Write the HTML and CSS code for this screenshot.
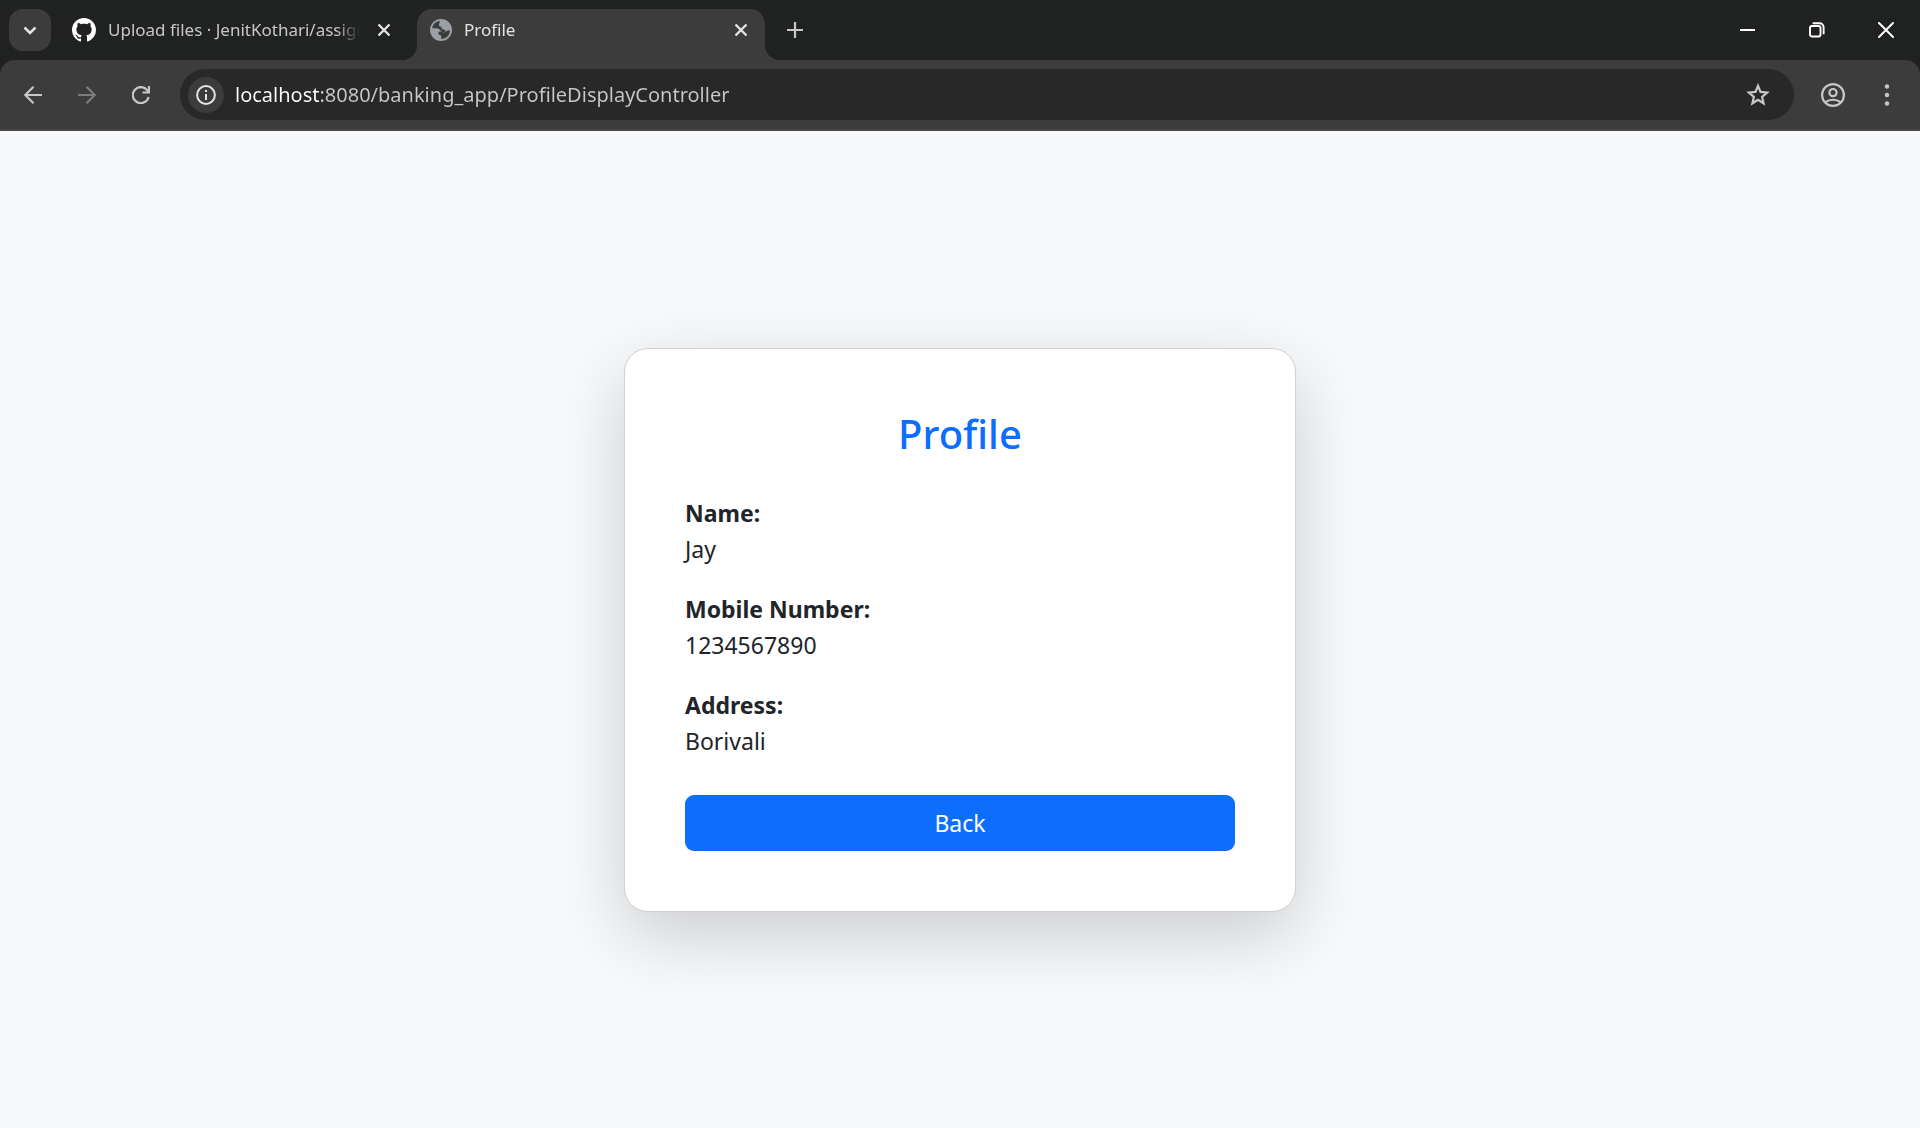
FILE: index.html
```html
<!DOCTYPE html>
<html lang="en">
<head>
  <meta charset="utf-8">
  <meta name="viewport" content="width=device-width, initial-scale=1">
  <title>Profile</title>
  <link rel="stylesheet" href="styles.css">
</head>
<body>
  <header class="browser">
    <div class="tab-strip">
      <button class="tab-search" type="button" aria-label="Search tabs">
        <svg width="14" height="9" viewBox="0 0 14 9"><path d="M1.500 1.500 7 7l5.500-5.500" fill="none" stroke="currentColor" stroke-width="2.500"/></svg>
      </button>
      <div class="tab">
        <svg class="tab-icon-github" width="24" height="24" viewBox="0 0 16 16"><path fill="currentColor" d="M8 0C3.580 0 0 3.580 0 8c0 3.540 2.290 6.530 5.470 7.590.4.070.55-.17.55-.38 0-.19-.01-.82-.01-1.490-2.010.37-2.530-.49-2.690-.94-.09-.23-.48-.94-.82-1.130-.28-.15-.68-.52-.01-.53.63-.01 1.080.58 1.230.82.72 1.210 1.870.87 2.330.66.07-.52.28-.87.51-1.070-1.780-.2-3.640-.89-3.640-3.950 0-.87.31-1.590.82-2.150-.08-.2-.36-1.020.08-2.120 0 0 .67-.21 2.200.82.64-.18 1.320-.27 2-.27s1.360.09 2 .27c1.530-1.040 2.200-.82 2.200-.82.44 1.100.16 1.920.08 2.120.51.56.82 1.270.82 2.150 0 3.070-1.870 3.750-3.650 3.950.29.25.54.73.54 1.480 0 1.070-.01 1.930-.01 2.200 0 .21.15.46.55.38A8.010 8.010 0 0 0 16 8c0-4.420-3.580-8-8-8z"/></svg>
        <span class="tab-title">Upload files · JenitKothari/assign</span>
        <button class="tab-close" type="button" aria-label="Close tab">
          <svg width="14" height="14" viewBox="0 0 14 14"><path d="m1.500 1.500 11 11m0-11-11 11" stroke="currentColor" stroke-width="2.400"/></svg>
        </button>
      </div>
      <div class="tab tab-active">
        <svg class="tab-icon-globe" width="22" height="22" viewBox="0 0 22 22">
          <circle cx="11" cy="11" r="11" fill="currentColor"/>
          <path class="globe-sea" d="M2.200 9.200C2.800 5.200 6 2.400 9.800 2.100 10 3 9.300 4.200 9 5.200c-.3 1.200.3 2 1.500 2.200.9.200 1 .9 1.100 1.700.1 1 .9 1.300 2 1.300 1.400 0 1.900.7 1.700 1.800-.2.900-.9 1.300-2 1.200-1.500-.1-1.900-1-2.700-2C9.500 9.800 8 9.300 6 9.200z"/>
          <path class="globe-sea" d="M19.900 11.300c.1 5-3.700 8.600-8.700 8.700v-2.300c0-.9-.4-1.300-1.300-1.600-1.200-.4-1.700-1.200-1.500-2.300.2-1 1-1.400 2.300-1.200 1.200.2 1.700.9 3 1 2 .1 2.500-1.800 4-2z"/>
        </svg>
        <span class="tab-title">Profile</span>
        <button class="tab-close" type="button" aria-label="Close tab">
          <svg width="14" height="14" viewBox="0 0 14 14"><path d="m1.500 1.500 11 11m0-11-11 11" stroke="currentColor" stroke-width="2.400"/></svg>
        </button>
      </div>
      <button class="new-tab" type="button" aria-label="New tab">
        <svg width="16" height="16" viewBox="0 0 16 16"><path d="M8 0v16M0 8h16" stroke="currentColor" stroke-width="2.200"/></svg>
      </button>
      <div class="window-controls">
        <button type="button" aria-label="Minimize">
          <svg width="16" height="16" viewBox="0 0 16 16"><path d="M0 8h15" stroke="currentColor" stroke-width="2"/></svg>
        </button>
        <button type="button" aria-label="Restore">
          <svg width="16" height="16" viewBox="0 0 16 16"><g fill="none" stroke="currentColor" stroke-width="1.900"><rect x="1" y="4" width="10.500" height="10.500" rx="2"/><path d="M3.600 1.200h7a4 4 0 0 1 4 4v7"/></g></svg>
        </button>
        <button type="button" aria-label="Close">
          <svg width="16" height="16" viewBox="0 0 16 16"><path d="m1 1 14 14m0-14L1 15" stroke="currentColor" stroke-width="2" stroke-linecap="round"/></svg>
        </button>
      </div>
    </div>
    <div class="toolbar">
      <nav class="toolbar-nav" aria-label="History">
        <button type="button" aria-label="Back">
          <svg width="18" height="18" viewBox="0 0 18 18"><path d="M18 9H1.500M9.500.8 1.300 9l8.200 8.200" fill="none" stroke="currentColor" stroke-width="2.200"/></svg>
        </button>
        <button type="button" aria-label="Forward" disabled>
          <svg width="18" height="18" viewBox="0 0 18 18"><path d="M0 9h16.500M8.500.8 16.700 9l-8.200 8.200" fill="none" stroke="currentColor" stroke-width="2.200"/></svg>
        </button>
        <button type="button" aria-label="Reload">
          <svg width="18" height="18" viewBox="0 0 18 18"><path d="M16.600 11A8 8 0 1 1 15.200 4.200L16.500 6" fill="none" stroke="currentColor" stroke-width="2.200"/><path d="M15.900 0H18v7.600h-7.500V5.500h5.400z" fill="currentColor"/></svg>
        </button>
      </nav>
      <div class="address-bar">
        <button class="site-info" type="button" aria-label="View site information">
          <svg width="20" height="20" viewBox="0 0 20 20"><circle cx="10" cy="10" r="8.900" fill="none" stroke="currentColor" stroke-width="2"/><path d="M9 9h2v6H9zM9 5h2v2H9z" fill="currentColor"/></svg>
        </button>
        <input class="address-input" type="text" aria-label="Address" spellcheck="false" value="localhost:8080/banking_app/ProfileDisplayController">
        <button class="bookmark" type="button" aria-label="Bookmark this tab">
          <svg width="24" height="23" viewBox="0 0 24 23"><path d="m12 2.800 2.500 6.100 6.600.6-5 4.300 1.500 6.500-5.600-3.500-5.600 3.500 1.500-6.500-5-4.300 6.600-.6z" fill="none" stroke="currentColor" stroke-width="2.200"/></svg>
        </button>
      </div>
      <button class="account" type="button" aria-label="You">
        <svg width="24" height="24" viewBox="0 0 24 24"><g fill="none" stroke="currentColor" stroke-width="2.200"><circle cx="12" cy="12" r="10.900"/><circle cx="12" cy="9.600" r="3.600"/><path d="M4.500 19.200c4-3.300 11-3.300 15 0"/></g></svg>
      </button>
      <button class="menu" type="button" aria-label="Browser menu">
        <svg width="6" height="22" viewBox="0 0 6 22" fill="currentColor"><circle cx="3" cy="2.500" r="2.200"/><circle cx="3" cy="11" r="2.200"/><circle cx="3" cy="19.500" r="2.200"/></svg>
      </button>
    </div>
  </header>
  <main class="page">
    <section class="card">
      <h1 class="card-title">Profile</h1>
      <dl class="details">
        <div>
          <dt>Name:</dt>
          <dd>Jay</dd>
        </div>
        <div>
          <dt>Mobile Number:</dt>
          <dd>1234567890</dd>
        </div>
        <div>
          <dt>Address:</dt>
          <dd>Borivali</dd>
        </div>
      </dl>
      <a class="btn" href="#">Back</a>
    </section>
  </main>
</body>
</html>
```
FILE: styles.css
```css
* {
  box-sizing: border-box;
}

body {
  margin: 0;
  min-height: 100vh;
  display: flex;
  flex-direction: column;
  background: #f8f9fb;
  color: #212529;
  font-family: "Segoe UI", "Noto Sans", sans-serif;
  font-size: 23px;
  line-height: 36px;
}

button {
  display: grid;
  place-items: center;
  padding: 0;
  border: 0;
  background: none;
  color: inherit;
  font: inherit;
}

svg {
  display: block;
  flex: none;
}

/* Browser frame */
.browser {
  background: #202221;
  color: #c7c7c7;
}

.tab-strip {
  display: flex;
  align-items: center;
  height: 60px;
  padding-left: 9px;
}

.tab-search {
  width: 42px;
  height: 42px;
  border-radius: 14px;
  background: #3c3c3c;
  color: #e3e3e3;
}

.tab {
  position: relative;
  display: flex;
  align-items: center;
  align-self: flex-end;
  gap: 12px;
  width: 348px;
  height: 51px;
  margin-left: 6px;
  padding: 0 9px 9px 15px;
  font-size: 17px;
  line-height: 24px;
}

.tab-active {
  margin-left: 12px;
  padding-right: 12px;
  padding-left: 13px;
  border-radius: 15px 15px 0 0;
  background: #3c3c3c;
  color: #e3e3e3;
}

/* Curved feet where the active tab meets the toolbar */
.tab-active::before,
.tab-active::after {
  content: "";
  position: absolute;
  bottom: 0;
  width: 15px;
  height: 15px;
}

.tab-active::before {
  right: 100%;
  background: radial-gradient(circle at 0 0, transparent 15px, #3c3c3c 15px);
}

.tab-active::after {
  left: 100%;
  background: radial-gradient(circle at 100% 0, transparent 15px, #3c3c3c 15px);
}

.tab-icon-github {
  color: #fff;
}

.tab-icon-globe {
  color: #9aa0a6;
}

.globe-sea {
  fill: #3c3c3c;
}

.tab-title {
  flex: 1;
  overflow: hidden;
  white-space: nowrap;
  mask-image: linear-gradient(to left, transparent, #000 24px);
}

.tab-close {
  width: 24px;
  height: 24px;
  color: #e3e3e3;
}

.new-tab {
  width: 42px;
  height: 42px;
  margin-left: 9px;
}

.window-controls {
  display: flex;
  margin-left: auto;
  color: #fff;
}

.window-controls button {
  width: 69px;
  height: 58px;
}

.toolbar {
  display: flex;
  align-items: center;
  padding: 9px 12px;
  border-bottom: 2px solid #474747;
  border-radius: 15px 15px 0 0;
  background: #3c3c3c;
}

.toolbar-nav {
  display: flex;
  gap: 12px;
  margin-right: 18px;
}

.toolbar-nav button,
.account,
.menu {
  width: 42px;
  height: 42px;
}

.toolbar-nav button:disabled {
  color: #7c7c7c;
}

.address-bar {
  display: flex;
  flex: 1;
  align-items: center;
  gap: 11px;
  height: 51px;
  padding: 0 15px 0 8px;
  border-radius: 26px;
  background: #282828;
}

.site-info {
  width: 36px;
  height: 36px;
  border-radius: 50%;
  background: #3c3c3c;
  color: #e3e3e3;
}

/* The host name is lighter than the rest of the address */
.address-input {
  flex: 1;
  min-width: 0;
  height: 36px;
  padding: 0;
  border: 0;
  background: linear-gradient(to right, #fff 84px, #c7c7c7 84px);
  background-clip: text;
  color: transparent;
  font: inherit;
  font-size: 20px;
}

.bookmark {
  width: 42px;
  height: 42px;
}

.account {
  margin: 0 12px 0 18px;
}

/* Profile page */
.page {
  display: grid;
  flex: 1;
  place-items: center;
  padding: 24px;
}

.card {
  width: 100%;
  max-width: 672px;
  padding: 60px;
  border: 1px solid #cfd0d0;
  border-radius: 24px;
  background: #fff;
  box-shadow: 0 24px 72px rgba(0, 0, 0, 0.18);
}

.card-title {
  margin: 0 0 36px;
  color: #0d6efd;
  font-size: 40px;
  font-weight: 500;
  line-height: 50px;
  text-align: center;
}

.details {
  display: grid;
  gap: 24px;
  margin: 0 0 36px;
}

.details dt {
  font-weight: 700;
}

.details dd {
  margin: 0;
}

.btn {
  display: block;
  padding: 10px 18px;
  border-radius: 9px;
  background: #0d6efd;
  color: #fff;
  text-align: center;
  text-decoration: none;
}
```
